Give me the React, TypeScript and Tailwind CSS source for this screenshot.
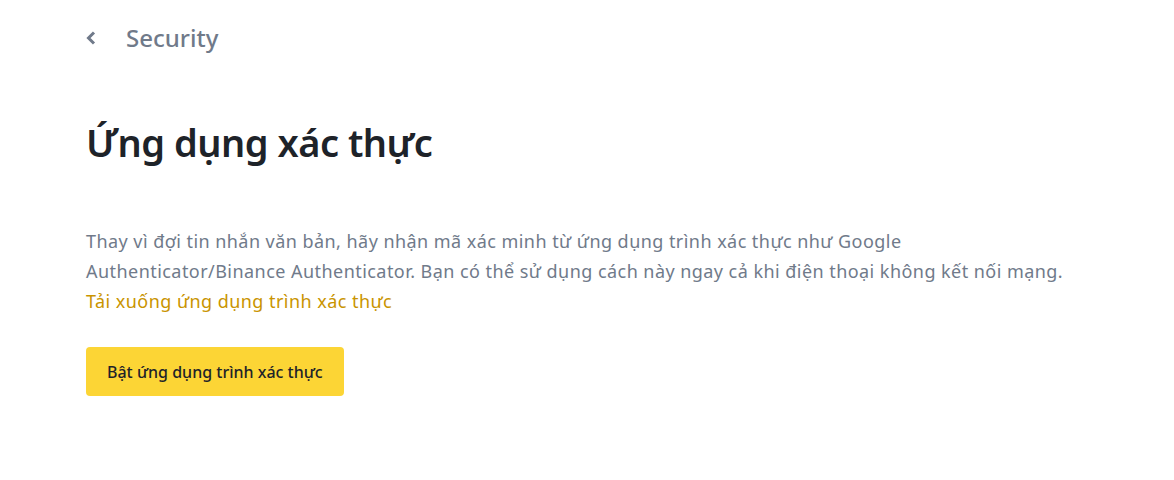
export default function App() {
  return (
    <div className="min-h-[480px] w-full bg-white font-['Noto_Sans',sans-serif]">
      <div className="px-[86px]">
        {/* Header */}
        <div className="flex h-[76px] items-center gap-[30px]">
          <svg width="10" height="14" viewBox="0 0 10 14" className="text-[#707a8a]">
            <polyline points="8,1.5 2.5,7 8,12.5" fill="none" stroke="currentColor" strokeWidth="3" />
          </svg>
          <span className="text-[24px] font-medium text-[#707a8a]">Security</span>
        </div>

        <h1 className="mt-[38px] text-[38px] font-semibold leading-[56px] tracking-[-0.5px] text-[#1e2329]">
          Ứng dụng xác thực
        </h1>

        <div className="mt-[56px] text-[18px] leading-[30px] tracking-[0.45px] text-[#707a8a]">
          <p>
            Thay vì đợi tin nhắn văn bản, hãy nhận mã xác minh từ ứng dụng trình xác thực như Google
            <br />
            Authenticator/Binance Authenticator. Bạn có thể sử dụng cách này ngay cả khi điện thoại không kết nối mạng.
          </p>
          <a className="block cursor-pointer text-[#c99400]">Tải xuống ứng dụng trình xác thực</a>
        </div>

        <button className="mt-[31px] h-[49px] rounded-[4px] bg-[#fcd535] px-[21px] text-[16px] font-medium text-[#1e2329]">
          Bật ứng dụng trình xác thực
        </button>
      </div>
    </div>
  );
}
